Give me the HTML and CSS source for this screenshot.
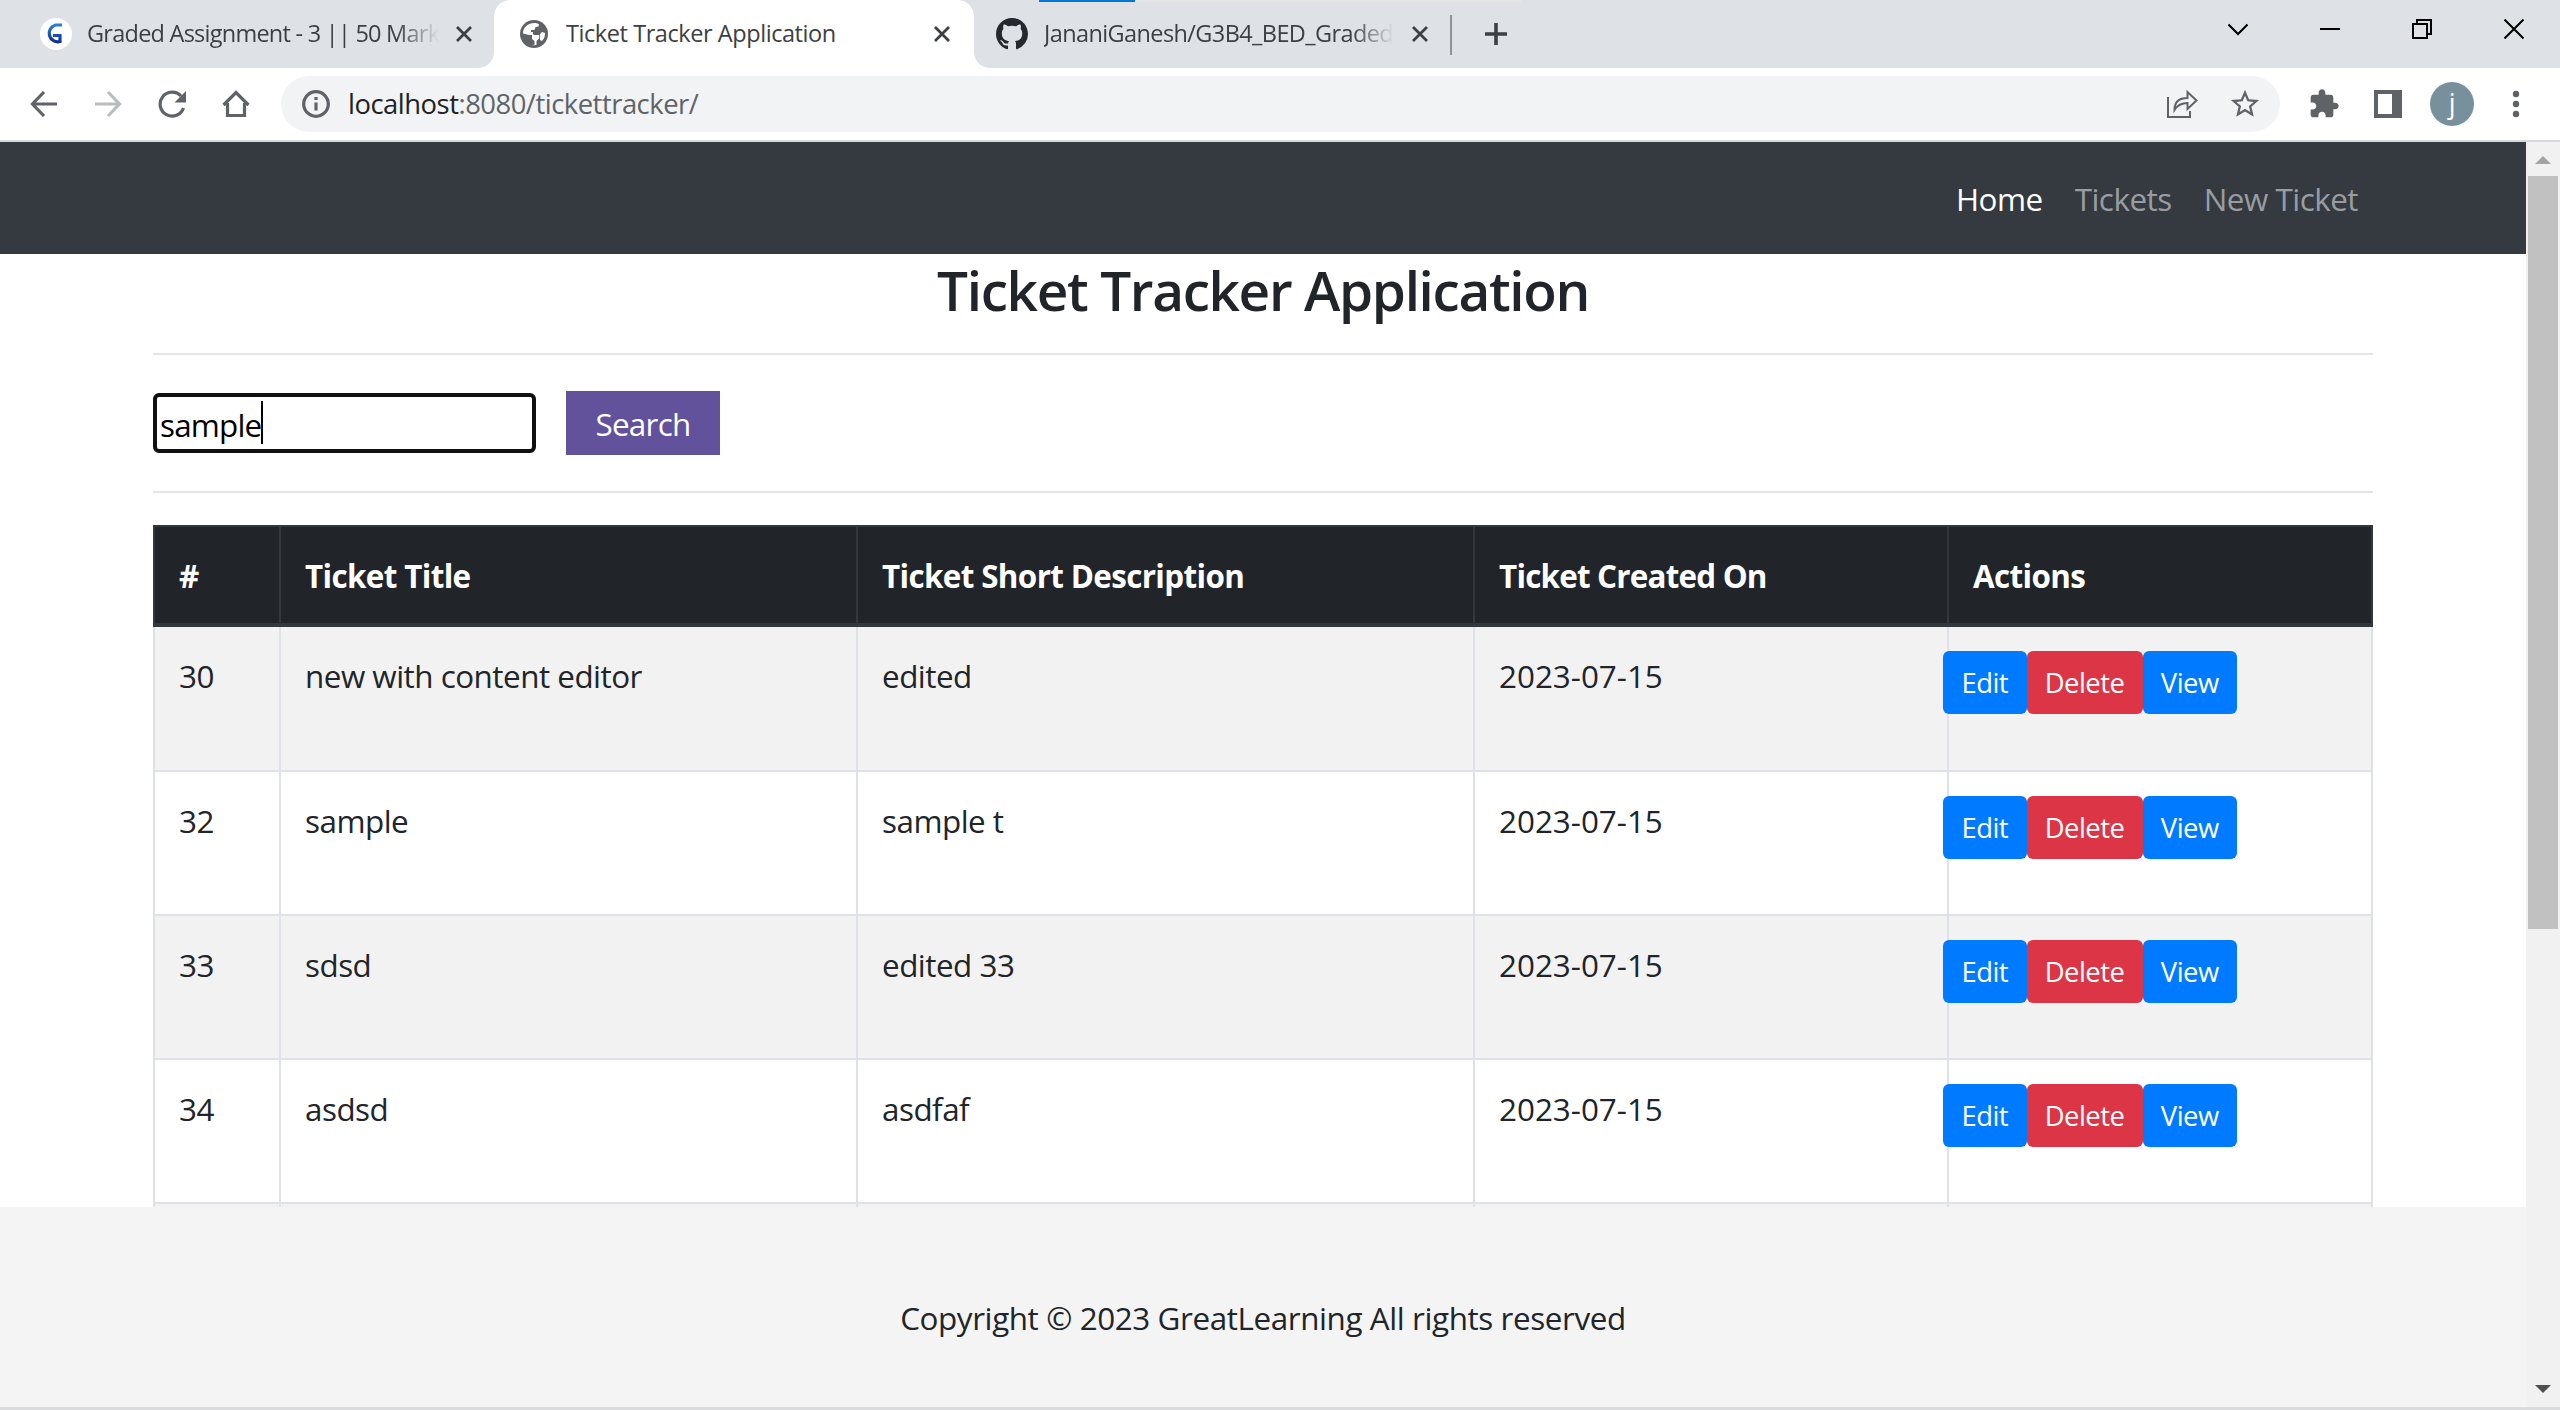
FILE: index.html
```html
<!DOCTYPE html>
<html lang="en">
<head>
<meta charset="utf-8">
<title>Ticket Tracker Application</title>
<link rel="stylesheet" href="styles.css">
</head>
<body>
<div class="browser">
  <div class="tabstrip">
    <div class="tab tab-first">
      <svg class="fav" width="32" height="32" viewBox="0 0 32 32"><defs><linearGradient id="g" x1="0" y1="0" x2="0" y2="1"><stop offset="0" stop-color="#2a7fd8"/><stop offset="1" stop-color="#122f94"/></linearGradient></defs><circle cx="16" cy="16" r="16" fill="#fff"/><path d="M22 7H15.500A8.500 8.500 0 1 0 20 23.500V17.500H13" fill="none" stroke="url(#g)" stroke-width="3.200"/></svg>
      <span class="tab-title fade">Graded Assignment - 3 || 50 Mark</span>
      <svg class="tab-x" width="18" height="18" viewBox="0 0 18 18"><path d="M2 2l14 14M16 2L2 16"/></svg>
    </div>
    <div class="tab tab-active">
      <svg class="fav" width="28" height="28" viewBox="0 0 28 28"><circle cx="14" cy="14" r="14" fill="#5f6368"/><path d="M14.500 3C8 3 3 7.500 3 13.500L9 15h3v4l2.500 2v3.800l-2.500.1c2 .6 3.500.2 4.500-.2V21l3-3v-3h-6v-3H11v-2h3.500l1-3 3-.5.500-2C17.500 3.300 16 3 14.500 3z" fill="#fff"/><path d="M19 8l-3 1v2h-3v3h6.500v4l2.500 2.500c2-2 2.800-4.500 2.800-6.500L21 13l-2-1z" fill="#5f6368"/><path d="M22 12l3 1c.2 3-1 6-3 8l-2-1v-6z" fill="#fff"/></svg>
      <span class="tab-title">Ticket Tracker Application</span>
      <svg class="tab-x" width="18" height="18" viewBox="0 0 18 18"><path d="M2 2l14 14M16 2L2 16"/></svg>
    </div>
    <div class="tab tab-last">
      <svg class="fav" width="32" height="32" viewBox="0 0 16 16"><path fill="#24292f" d="M8 0C3.580 0 0 3.580 0 8c0 3.540 2.290 6.530 5.470 7.590.4.070.55-.17.55-.38 0-.19-.01-.82-.01-1.490-2.010.37-2.530-.49-2.690-.94-.09-.23-.48-.94-.82-1.130-.28-.15-.68-.52-.01-.53.63-.01 1.080.58 1.230.82.72 1.210 1.870.87 2.330.66.070-.52.28-.87.51-1.070-1.780-.2-3.640-.89-3.640-3.950 0-.87.31-1.590.82-2.150-.08-.2-.36-1.020.08-2.120 0 0 .67-.21 2.200.82.64-.18 1.320-.27 2-.27s1.360.09 2 .27c1.530-1.040 2.200-.82 2.200-.82.44 1.100.16 1.920.08 2.120.51.56.82 1.270.82 2.150 0 3.070-1.870 3.750-3.650 3.950.29.25.54.73.54 1.480 0 1.070-.01 1.930-.01 2.200 0 .21.15.46.55.38A8.010 8.010 0 0 0 16 8c0-4.420-3.580-8-8-8z"/></svg>
      <span class="tab-title fade">JananiGanesh/G3B4_BED_Graded</span>
      <svg class="tab-x" width="18" height="18" viewBox="0 0 18 18"><path d="M2 2l14 14M16 2L2 16"/></svg>
      <i class="tab-sep"></i>
    </div>
    <svg class="new-tab" width="24" height="24" viewBox="0 0 24 24"><path d="M12 1v22M1 12h22"/></svg>
    <div class="window-controls">
      <svg width="20" height="20" viewBox="0 0 20 20"><path d="M0.500 5.500l9.500 9.500L19.500 5.500"/></svg>
      <svg width="20" height="20" viewBox="0 0 20 20"><path d="M0 10h20"/></svg>
      <svg width="20" height="20" viewBox="0 0 20 20"><path d="M1 5h14v14H1zM5 5V1h14v14h-4"/></svg>
      <svg width="20" height="20" viewBox="0 0 20 20"><path d="M0.500 0.500l19 19M19.500 0.500l-19 19"/></svg>
    </div>
    <i class="load-bar"></i>
  </div>

  <div class="toolbar">
    <div class="nav-icons">
      <svg width="28" height="28" viewBox="0 0 28 28"><path d="M27 14H3M14 2L2.500 14 14 26"/></svg>
      <svg class="dim" width="28" height="28" viewBox="0 0 28 28"><path d="M1 14h24M14 2l11.500 12L14 26"/></svg>
      <svg width="28" height="28" viewBox="0 0 28 28"><path d="M25.500 18A12 12 0 1 1 23 6"/><path class="solid" d="M28 1v11.500H16.500z"/></svg>
      <svg width="28" height="28" viewBox="0 0 28 28"><path d="M1.500 15L14 2.500 26.500 15M5.500 13v12.500h17V13"/></svg>
    </div>
    <div class="omnibox">
      <svg width="28" height="28" viewBox="0 0 28 28"><circle cx="14" cy="14" r="12.300"/><path d="M14 12.500v8M14 7v3"/></svg>
      <span class="url"><b>localhost</b>:8080/tickettracker/</span>
      <svg class="thin" width="32" height="30" viewBox="0 0 32 30"><path d="M2 8v20h22v-6"/><path d="M8.500 21c0-8 4-12 13-12V3l9 8.500-9 8.500v-6c-6 0-10 2-13 7z"/></svg>
      <svg class="star" width="34" height="34" viewBox="0 0 24 24"><path class="solid" d="M22 9.240l-7.190-.62L12 2 9.190 8.630 2 9.240l5.460 4.730L5.820 21 12 17.270 18.180 21l-1.630-7.030L22 9.240zM12 15.400l-3.760 2.270 1-4.280-3.320-2.880 4.380-.38L12 6.100l1.710 4.040 4.380.38-3.320 2.880 1 4.280L12 15.400z"/></svg>
    </div>
    <svg class="puzzle" width="32" height="32" viewBox="0 0 24 24"><path class="solid" d="M20.500 11H19V7c0-1.100-.9-2-2-2h-4V3.500C13 2.120 11.880 1 10.500 1S8 2.120 8 3.500V5H4c-1.100 0-1.990.9-1.990 2v3.800H3.500c1.490 0 2.700 1.210 2.700 2.700s-1.210 2.700-2.700 2.700H2V20c0 1.100.9 2 2 2h3.800v-1.500c0-1.490 1.210-2.700 2.700-2.700s2.700 1.210 2.700 2.700V22H17c1.100 0 2-.9 2-2v-4h1.500c1.380 0 2.500-1.120 2.500-2.500S21.880 11 20.500 11z"/></svg>
    <svg class="panel" width="28" height="28" viewBox="0 0 28 28"><path class="solid" fill-rule="evenodd" d="M0 0h28v28H0zM4 4v20h14V4z"/></svg>
    <span class="avatar">j</span>
    <svg class="dots" width="8" height="28" viewBox="0 0 8 28"><g class="solid"><circle cx="4" cy="4" r="3.200"/><circle cx="4" cy="14" r="3.200"/><circle cx="4" cy="24" r="3.200"/></g></svg>
  </div>

  <div class="viewport">
    <div class="page">
      <nav class="navbar"><a class="home">Home</a><a class="tickets">Tickets</a><a class="new">New Ticket</a></nav>
      <main class="content">
        <h3>Ticket Tracker Application</h3>
        <hr>
        <div class="search"><div class="field">sample<i class="caret"></i></div><button>Search</button></div>
        <hr>
        <div class="table">
          <div class="row head"><div>#</div><div>Ticket Title</div><div>Ticket Short Description</div><div class="created">Ticket Created On</div><div>Actions</div></div>
          <div class="row odd tall"><div>30</div><div>new with content editor</div><div>edited</div><div class="date">2023-07-15</div><div class="actions"><a class="edit">Edit</a><a class="delete">Delete</a><a class="view">View</a></div></div>
          <div class="row"><div>32</div><div>sample</div><div>sample t</div><div class="date">2023-07-15</div><div class="actions"><a class="edit">Edit</a><a class="delete">Delete</a><a class="view">View</a></div></div>
          <div class="row odd"><div>33</div><div>sdsd</div><div>edited 33</div><div class="date">2023-07-15</div><div class="actions"><a class="edit">Edit</a><a class="delete">Delete</a><a class="view">View</a></div></div>
          <div class="row"><div>34</div><div>asdsd</div><div>asdfaf</div><div class="date">2023-07-15</div><div class="actions"><a class="edit">Edit</a><a class="delete">Delete</a><a class="view">View</a></div></div>
          <div class="row odd"><div></div><div></div><div></div><div></div><div></div></div>
        </div>
      </main>
      <footer>Copyright © 2023 GreatLearning All rights reserved</footer>
    </div>
    <div class="scrollbar">
      <svg width="16" height="8" viewBox="0 0 16 8"><path fill="#a3a3a3" d="M0 8L8 0l8 8z"/></svg>
      <i class="thumb"></i>
      <svg class="down" width="16" height="8" viewBox="0 0 16 8"><path fill="#505050" d="M0 0h16L8 8z"/></svg>
    </div>
  </div>
</div>
</body>
</html>
```
FILE: styles.css
```css
* { box-sizing: border-box; }
body {
  margin: 0;
  font-family: "Open Sans", "Noto Sans", sans-serif;
  font-size: 31.4px;
  letter-spacing: -0.5px;
  color: #212529;
}
svg { flex: none; display: block; }
i { display: block; }
.browser {
  width: 2560px;
  height: 1410px;
  display: flex;
  flex-direction: column;
  overflow: hidden;
  background: #fff;
}

/* tab strip */
.tabstrip {
  position: relative;
  height: 68px;
  flex: none;
  display: flex;
  align-items: center;
  background: #fff;
  font-size: 23.5px;
  letter-spacing: -0.43px;
  color: #3c4043;
}
.tab {
  height: 68px;
  display: flex;
  align-items: center;
  background: #dee1e6;
}
.tab-first { width: 494px; padding-left: 40px; border-bottom-right-radius: 16px; letter-spacing: -0.750px; }
.tab-active {
  position: relative;
  width: 480px;
  padding-left: 26px;
  background: #fff;
}
.tab-last { width: 479px; padding-left: 22px; border-bottom-left-radius: 16px; letter-spacing: -0.600px; }
.tab-active::before, .tab-active::after {
  content: "";
  position: absolute;
  top: 0;
  width: 16px;
  height: 16px;
}
.tab-active::before { left: 0; background: radial-gradient(circle at 100% 100%, #fff 15.500px, #dee1e6 16px); }
.tab-active::after { right: 0; background: radial-gradient(circle at 0 100%, #fff 15.500px, #dee1e6 16px); }
.tab-title {
  line-height: 40px;
  margin: 0 17px 2px 18px;
  width: 350px;
  flex: none;
  white-space: nowrap;
}
.tab-first .tab-title { margin-left: 15px; width: 352px; margin-right: 16px; }
.tab-last .tab-title { margin-left: 16px; width: 350px; }
.fade {
  -webkit-mask-image: linear-gradient(90deg, #000 88%, transparent);
  mask-image: linear-gradient(90deg, #000 88%, transparent);
}
.tab-x { stroke: #3c4043; stroke-width: 2.800; fill: none; }
.tab-sep { width: 2px; height: 40px; margin: 2px 0 0 21px; background: #8f9297; }
.new-tab { box-sizing: content-box; padding: 22px 0 22px 31px; background: #dee1e6; stroke: #3c4043; stroke-width: 3.600; fill: none; }
.window-controls {
  flex: 1;
  height: 68px;
  display: flex;
  justify-content: flex-end;
  align-items: flex-start;
  gap: 72px;
  padding: 19px 36px 0 0;
  background: #dee1e6;
  stroke: #000;
  stroke-width: 2;
  fill: none;
}
.load-bar {
  position: absolute;
  left: 1039px;
  top: 0;
  width: 482px;
  height: 2px;
  background: linear-gradient(90deg, #0078d7 96px, #e6e6e6 96px);
}

/* toolbar */
.toolbar {
  height: 74px;
  flex: none;
  display: flex;
  align-items: center;
  padding: 0 40px 0 30px;
  border-bottom: 2px solid #d7dadf;
  fill: none;
  stroke: #5f6368;
  stroke-width: 3.200;
}
.solid { fill: #5f6368; stroke: none; }
.nav-icons { display: flex; gap: 36px; }
.dim { stroke: #babcbe; }
.omnibox {
  width: 1999px;
  height: 56px;
  margin-left: 31px;
  padding: 0 18px 0 21px;
  display: flex;
  align-items: center;
  border-radius: 28px;
  background: #f1f3f4;
}
.url {
  flex: 1;
  margin: -1px 0 0 18px;
  font-size: 27.400px;
  line-height: 40px;
  letter-spacing: -0.480px;
  color: #5f6368;
}
.url b { font-weight: 400; color: #202124; }
.thin { stroke-width: 2; }
.star { margin-left: 30px; }
.puzzle { margin-left: 28px; }
.panel { margin-left: 34px; }
.avatar {
  width: 44px;
  height: 44px;
  margin: 0 38px 0 28px;
  flex: none;
  border-radius: 50%;
  background: #78909c;
  color: #fff;
  font-size: 27px;
  line-height: 41px;
  text-align: center;
}

/* page */
.viewport { flex: 1; display: flex; min-height: 0; border-bottom: 3px solid #dadbdd; }
.page { width: 2526px; display: flex; flex-direction: column; }
.navbar {
  height: 112px;
  flex: none;
  display: flex;
  align-items: center;
  justify-content: flex-end;
  gap: 32px;
  padding-right: 168px;
  background: #343a40;
  color: #9a9da0;
}
.home { color: #fff; }
.content { flex: 1; min-height: 0; overflow: hidden; padding: 0 153px; }
h3 {
  margin: 0 0 24px;
  font-size: 54.900px;
  font-weight: 600;
  line-height: 75px;
  letter-spacing: -1.360px;
  text-align: center;
  margin-top: -2px;
  padding-top: 0;
  margin-bottom: 26px;
}
hr { height: 2px; margin: 0; border: 0; background: #e5e5e5; }
.search { display: flex; align-items: center; gap: 30px; padding: 36px 0; }
.field {
  width: 383px;
  height: 60px;
  display: flex;
  align-items: center;
  padding: 2px 0 0 3px;
  border: 4px solid #101010;
  border-radius: 6px;
  color: #000;
  letter-spacing: -0.800px;
}
.caret { width: 2px; height: 43px; margin-top: -4px; background: #000; }
button {
  width: 154px;
  height: 64px;
  padding: 1px 0 0;
  border: 0;
  background: #61529b;
  color: #fff;
  font: inherit;
  letter-spacing: -0.700px;
}
.table { margin-top: 32px; }
.row {
  height: 144px;
  display: grid;
  grid-template-columns: 126px 577px 617px 474px 426px;
  line-height: 48px;
  border-bottom: 2px solid #dee2e6;
}
.row > div { padding: 25px 24px 0; border-left: 2px solid #dee2e6; }
.row > div:last-child { border-right: 2px solid #dee2e6; }
.odd { background: #f2f2f2; }
.tall { height: 145px; }
.head {
  height: 102px;
  background: #212529;
  color: #fff;
  font-weight: 700;
  letter-spacing: -0.640px;
  border-top: 2px solid #32383e;
  border-bottom: 4px solid #32383e;
}
.head > div, .head > div:last-child { border-color: #32383e; }
.created { letter-spacing: -0.800px; }
.date { letter-spacing: 0; }
.row > .actions { display: flex; align-items: flex-start; padding: 24px 0 0; }
.actions a {
  height: 63px;
  line-height: 64px;
  border-radius: 6px;
  background: #007bff;
  color: #fff;
  font-size: 27.400px;
  text-align: center;
}
.actions .edit { width: 83.500px; margin-left: -6px; }
.actions .delete { width: 116px; background: #dc3545; }
.actions .view { width: 94.500px; }
footer {
  height: 200px;
  flex: none;
  padding-top: 87px;
  line-height: 48px;
  text-align: center;
  letter-spacing: -0.400px;
  background: #f4f4f4;
}

/* scrollbar */
.scrollbar {
  width: 34px;
  display: flex;
  flex-direction: column;
  align-items: center;
  padding: 14px 0;
  background: #f1f1f1;
}
.thumb { width: 30px; height: 753px; margin-top: 12px; background: #c1c1c1; }
.down { margin-top: auto; }
```
